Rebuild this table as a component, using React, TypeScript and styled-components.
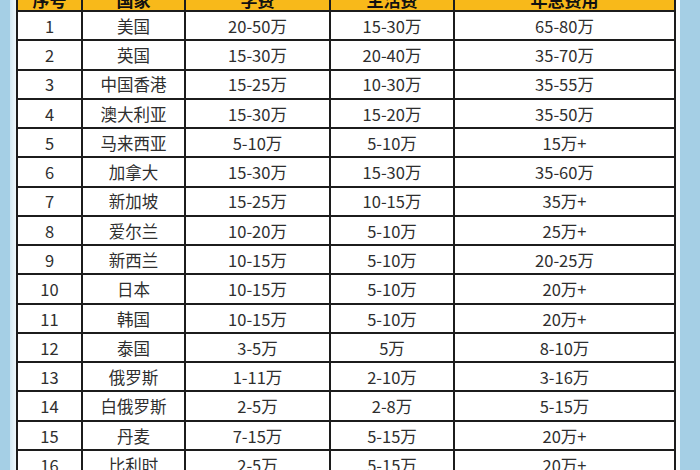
import React from "react";
import styled, { createGlobalStyle } from "styled-components";

const GlobalStyle = createGlobalStyle`
  html, body {
    margin: 0;
    padding: 0;
    background: #a5cfe5;
  }
`;

const Page = styled.div`
  width: 700px;
  height: 470px;
  overflow: hidden;
  display: flex;
  background: #a5cfe5;
  font-family: "Noto Sans CJK SC", "Noto Sans", sans-serif;
`;

const Sheet = styled.div`
  margin-left: 10px;
  width: 670px;
  padding: 0 6px;
  box-sizing: border-box;
  background: linear-gradient(to right, #d3e9f4 0px, #eef7fb 6px, #fbfdfe 20px);
`;

const Grid = styled.table`
  width: 658px;
  margin-top: -28px;
  border-collapse: collapse;
  table-layout: fixed;
  background: #ffffff;
`;

const HeadCell = styled.th`
  height: 34px;
  padding: 0 0 2px;
  background: #f8b91a;
  border: 2px solid #1c1c1c;
  font-size: 17px;
  font-weight: 700;
  line-height: 1;
  color: #111;
  text-align: center;
  vertical-align: bottom;
`;

const Cell = styled.td`
  height: 26.27px;
  padding: 1px 0 0;
  border: 2px solid #1c1c1c;
  font-size: 16.5px;
  color: #2e2e2e;
  text-align: center;
  vertical-align: middle;
  line-height: 1;
`;

const columns = [
  { label: "序号", width: 65 },
  { label: "国家", width: 103 },
  { label: "学费", width: 145 },
  { label: "生活费", width: 124 },
  { label: "年总费用", width: 221 },
];

const rows: [string, string, string, string][] = [
  ["美国", "20-50万", "15-30万", "65-80万"],
  ["英国", "15-30万", "20-40万", "35-70万"],
  ["中国香港", "15-25万", "10-30万", "35-55万"],
  ["澳大利亚", "15-30万", "15-20万", "35-50万"],
  ["马来西亚", "5-10万", "5-10万", "15万+"],
  ["加拿大", "15-30万", "15-30万", "35-60万"],
  ["新加坡", "15-25万", "10-15万", "35万+"],
  ["爱尔兰", "10-20万", "5-10万", "25万+"],
  ["新西兰", "10-15万", "5-10万", "20-25万"],
  ["日本", "10-15万", "5-10万", "20万+"],
  ["韩国", "10-15万", "5-10万", "20万+"],
  ["泰国", "3-5万", "5万", "8-10万"],
  ["俄罗斯", "1-11万", "2-10万", "3-16万"],
  ["白俄罗斯", "2-5万", "2-8万", "5-15万"],
  ["丹麦", "7-15万", "5-15万", "20万+"],
  ["比利时", "2-5万", "5-15万", "20万+"],
];

const App: React.FC = () => {
  return (
    <Page>
      <GlobalStyle />
      <Sheet>
        <Grid>
          <colgroup>
            {columns.map((c) => (
              <col key={c.label} style={{ width: c.width }} />
            ))}
          </colgroup>
          <thead>
            <tr>
              {columns.map((c) => (
                <HeadCell key={c.label}>{c.label}</HeadCell>
              ))}
            </tr>
          </thead>
          <tbody>
            {rows.map((r, i) => (
              <tr key={i}>
                <Cell>{i + 1}</Cell>
                {r.map((v, j) => (
                  <Cell key={j}>{v}</Cell>
                ))}
              </tr>
            ))}
          </tbody>
        </Grid>
      </Sheet>
    </Page>
  );
};

export default App;
